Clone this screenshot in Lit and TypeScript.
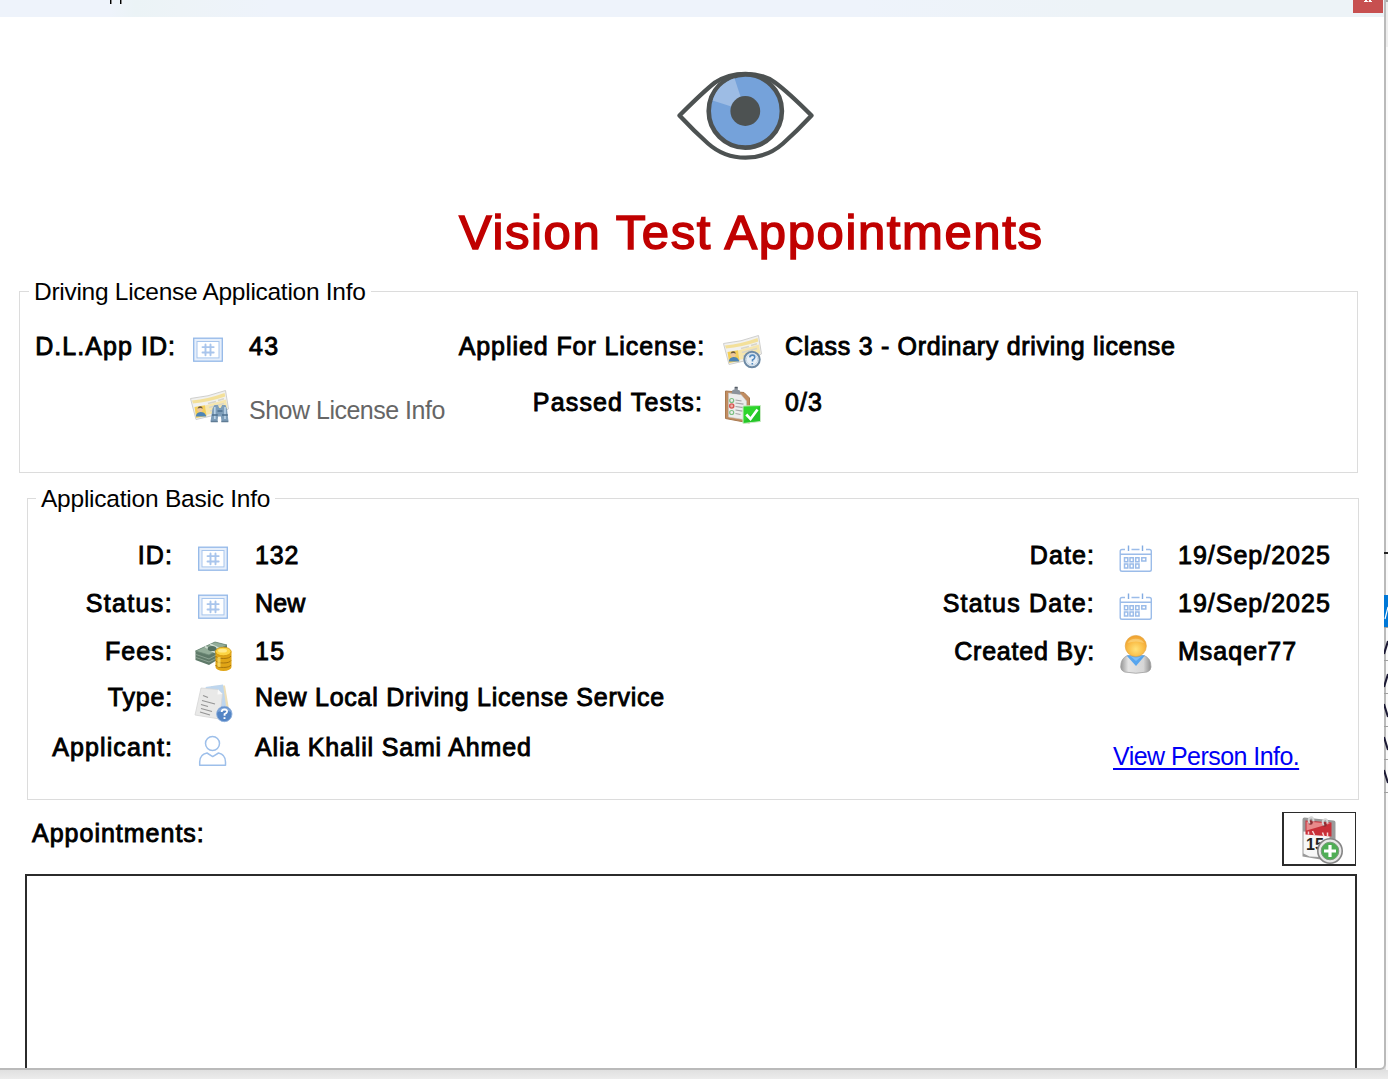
import { LitElement, html, css, svg, type TemplateResult } from "lit";
import { customElement } from "lit/decorators.js";
import { classMap } from "lit/directives/class-map.js";
import { styleMap } from "lit/directives/style-map.js";

type Art = TemplateResult;

const hash = svg`
  <rect x="5.7" y="10.2" width="28.6" height="23" fill="#e6effb" stroke="#93b8e8" stroke-width="1.3"/>
  <rect x="9" y="13.500" width="22" height="16.4" fill="#fff" stroke="#a8c6ed" stroke-width="1"/>
  <path d="M17.500 16.500v10.800M22.500 16.500v10.800M14.500 19.100h11.200M14.500 24.500h11.200" stroke="#a9c5ec" stroke-width="1.900" stroke-linecap="round"/>`;

const card = svg`
  <path d="M2.500 15.500 Q20 14 37.500 7.500 L40.500 26 Q25 34 8 36.500 Z" fill="#f1f1ef" stroke="#cfcfcd" stroke-width="1"/>
  <path d="M4 17.500 Q20 16 36.500 10 L37.300 13.500 Q21 19 5 20.500Z" fill="#f3e09a"/>
  <path d="M17 22.500L38 16.500L39.300 25Q30 30 18 32Z" fill="#f6e6ae"/>
  <path d="M20 20.500l8-2M30 17.500l6-1.800M21 24.500l15-4M22 28l12-3" stroke="#d9d6c8" stroke-width="1.600"/>
  <path d="M6.500 24L17 22.300L18.500 33L8.200 35Z" fill="#f4cf58"/>
  <circle cx="12" cy="26.500" r="2.700" fill="#edc79b"/>
  <path d="M9.500 25.500q1-3 4.500-1.800l.8 2q-2-1.300-5.300-.2z" fill="#6b5a3c"/>
  <path d="M7.800 33.500q.5-4.200 4.700-4.500q4-.1 5.500 3.400l.2 1z" fill="#4d84b6"/>`;

const cardHelp = svg`${card}
  <circle cx="31" cy="31.500" r="7.700" fill="#e9f0f6" stroke="#6d8aa5" stroke-width="2"/>
  <circle cx="31" cy="31.500" r="5.700" fill="none" stroke="#c0d2e2" stroke-width=".9"/>
  <path d="M28.700 29.300q.4-2.300 2.800-2.200q2.600.3 2.200 2.500q-.3 1.200-2.200 2.400v1.500M31.300 35v1.500" fill="none" stroke="#5289bd" stroke-width="1.600"/>`;

const cardFind = svg`${card}
  <path d="M24.500 25.500l2-3.500h3.400l1.300 3h1.600l1.300-3h3.400l1.500 4 1.500 12.500h-7l-.6-5h-2.800l-.6 5h-7z" fill="#7d9db9"/>
  <path d="M26.800 24v12M37 24v12" stroke="#b9d2e6" stroke-width="1.700"/>
  <path d="M24 32h5.800M34 32h5.800M29.500 28h5" stroke="#4c6f8e" stroke-width="1.300"/>
  <path d="M22.800 38.500h7M33.300 38.500h7" stroke="#5f7c95" stroke-width="1.400"/>`;

const clipboard = svg`
  <path d="M4.500 7L23 8.500L28.500 14V39L4.500 34.500Z" fill="#c18c5f" stroke="#a87950" stroke-width="1"/>
  <path d="M7.500 9L20 10.500L25.500 17V36L7.500 33Z" fill="#ececec" stroke="#c5c5c5" stroke-width=".6"/>
  <path d="M10.500 9.500l1-3.500 2-.5v-2.300h3.300v2.500l2 .8.800 4z" fill="#8b929b"/>
  <path d="M13.800 3.500h2.800" stroke="#555d67" stroke-width="1.500"/>
  <path d="M14.500 16l6 1M14.500 19l8 1.200M14.500 22.500l8 1.200M14.500 26l7 1.200M14.500 29.500l5 1" stroke="#a4a4a4" stroke-width="1.200"/>
  <circle cx="10.700" cy="16.500" r="2" fill="none" stroke="#7cbf83" stroke-width="1.200"/>
  <circle cx="10.700" cy="22" r="2.100" fill="#ebb0ad" stroke="#d75750" stroke-width="1.400"/>
  <circle cx="10.700" cy="28.500" r="2" fill="none" stroke="#7cbf83" stroke-width="1.200"/>
  <path d="M22 22L39.500 21.500V37.500L22 39.500Z" fill="#2ed62c" stroke="#c9e9c5" stroke-width="1"/>
  <path d="M23 37.500L39 22v15l-16 1.600z" fill="#19b422" opacity=".5"/>
  <path d="M25.300 30.500l4.200 4.500l7-9.500" fill="none" stroke="#fff" stroke-width="2.700"/>`;

const money = svg`
  <path d="M2.500 18L22 9L34 12V21L16 32L2.500 27Z" fill="#5f7a69"/>
  <path d="M2.500 18L22 9L34 12L16 22Z" fill="#93ad99" stroke="#6f8a78" stroke-width=".8"/>
  <path d="M12 13.500l10 6M17 11l10 5" stroke="#d0ddd2" stroke-width="1.700"/>
  <ellipse cx="19" cy="15.500" rx="4.300" ry="2.600" fill="#557061"/>
  <path d="M3 21.500l13 4.500 9-5M3 24.500l13 4.500 8-4" fill="none" stroke="#9fb3a4" stroke-width=".7"/>
  <path d="M22.500 18.500v15.500a8 4 0 0 0 16 0v-15.500z" fill="#e0a516"/>
  <path d="M22.500 23a8 3.300 0 0 0 15.500 0M22.500 27.500a8 3.300 0 0 0 15.500 0M22.500 32a8 3.300 0 0 0 15.500 0" fill="none" stroke="#a8750c" stroke-width="1"/>
  <path d="M26 24v10" stroke="#ffe774" stroke-width="3" opacity=".7"/>
  <ellipse cx="30.300" cy="18.500" rx="7.800" ry="4.300" fill="#fcd443" stroke="#cf930e" stroke-width=".8"/>
  <ellipse cx="29.500" cy="17.700" rx="4.500" ry="1.900" fill="#ffe98a"/>`;

const papers = svg`
  <path d="M18 5l14-.5L36.500 31l-12 5z" fill="#eedfb7"/>
  <path d="M12.500 6L30 3.500L34 32l-13 4z" fill="#bed6ee"/>
  <path d="M8 7L25 8.500L29.500 13L26.500 38L2 34Z" fill="#e9e9e8" stroke="#d6d6d6" stroke-width=".8"/>
  <path d="M25 8.500l-.5 5 5-.5z" fill="#fafafa"/>
  <path d="M10 14.500l5 2M9 19.500l13 3.500M8 23.500l7 2M8 27.500l11 3M7 31l10 3" stroke="#949494" stroke-width="1.200"/>
  <circle cx="31.300" cy="33" r="7.700" fill="#5485c5" stroke="#91b1dc" stroke-width=".9"/>
  <path d="M24.500 31a7 6 0 0 1 13.600 0q-6-3-13.600 0z" fill="#91b5e2" opacity=".7"/>
  <path d="M28.600 31q.3-2.600 2.900-2.600q2.800.2 2.500 2.500q-.2 1.200-2.400 2.300v1.600M31.500 36.300v1.700" fill="none" stroke="#fff" stroke-width="1.900"/>`;

const person = svg`
  <g fill="none" stroke="#9dbfea" stroke-width="1.500">
  <circle cx="19.500" cy="14.500" r="7"/>
  <path d="M6.700 36.200H32.500V33q0-7.500-7-9l-5.800 3.600L14 24q-7.300 1.500-7.300 9z" stroke-linejoin="round"/></g>`;

const calendar = svg`
  <g fill="none" stroke="#9bbce9" stroke-width="1.400">
  <path d="M8 12.500H5q-1.800 0-1.800 1.800V32.500q0 1.800 1.800 1.800H32.500q1.800 0 1.800-1.800V14.300q0-1.800-1.800-1.800H29M14.500 12.500h8M3.200 17.300H34.300"/>
  <path d="M11.500 8.500v5.500M25.500 8.500v5.500" stroke="#82abe2"/>
  <path d="M7.500 20.700h3.300v4h-3.300zM13 20.700h3.300v4H13zM18.700 20.700H22v4h-3.300zM24.800 20.700h4v3.300h-4zM7.500 27h3.300v4h-3.300zM13 27h3.300v4H13zM18.700 27H22v4h-3.300z" stroke-width="1.500"/></g>`;

const user = svg`
  <defs>
    <radialGradient id="head" cx=".5" cy=".65" r=".6"><stop offset="0" stop-color="#ffe27a"/><stop offset=".55" stop-color="#fbc14c"/><stop offset="1" stop-color="#f0a332"/></radialGradient>
    <linearGradient id="coat" x1="0" x2="1"><stop offset="0" stop-color="#979797"/><stop offset=".25" stop-color="#e4e4e4"/><stop offset=".75" stop-color="#d6d6d6"/><stop offset="1" stop-color="#8d8d8d"/></linearGradient>
  </defs>
  <path d="M3.700 34q0-9 7-11.500H27q7 2.500 7 11.500q0 3.500-4 5q-11 2.500-22.300 0q-4-1.500-4-5z" fill="url(#coat)" stroke="#a2a2a2" stroke-width=".8"/>
  <path d="M9.500 22.500H28L19 33Z" fill="#57a5ee"/>
  <path d="M12 22q7 5 14 0l-7 6z" fill="#7fbdf5"/>
  <circle cx="18.800" cy="13" r="10.600" fill="url(#head)" stroke="#e1a540" stroke-width=".6"/>
  <path d="M10.500 10a9 7 0 0 1 16.500 0q-8-3-16.500 0z" fill="#fff3c0" opacity=".35"/>`;

interface Row {
  label: string;
  art: Art;
  value: string;
  /* letter tracking in px for each side of the row */
  track?: [number, number];
  mod?: "muted" | "raised" | "inset";
}

@customElement("info-row")
export class InfoRow extends LitElement {
  static properties = { row: { attribute: false } };
  declare row: Row;
  static styles = css`
    :host { display: flex; align-items: center; height: 100%; white-space: pre; }
    .label { box-sizing: border-box; width: var(--label-w); text-align: right; flex: none; }
    .icon { width: 44px; height: 44px; flex: none; margin: 8px 0 0 var(--icon-gap); overflow: visible; }
    .value { margin-left: var(--value-gap); }
    .label, .value { font: 25px/28px "Liberation Sans", sans-serif; -webkit-text-stroke: 0.9px #000; color: #000; }
    .value.muted { color: #666; -webkit-text-stroke: 0; margin-bottom: 2px; }
    .icon.muted { margin-top: -12px; }
    .label.raised, .value.raised { margin-bottom: 3px; }
    .label.inset { padding-right: 2px; }
  `;
  render() {
    const { label, art, value, mod = "", track = [0.7, 0.7] } = this.row;
    const cls = (base: string) =>
      classMap({ [base]: true, muted: mod === "muted", raised: mod === "raised", inset: mod === "inset" });
    return html`<span class=${cls("label")} style=${styleMap({ letterSpacing: `${track[0]}px` })}>${label}</span>
      <svg class=${cls("icon")} viewBox="0 0 44 44" aria-hidden="true">${art}</svg>
      <span class=${cls("value")} style=${styleMap({ letterSpacing: `${track[1]}px` })}>${value}</span>`;
  }
}

@customElement("app-root")
export class AppRoot extends LitElement {
  static styles = css`
    :host { display: block; width: 1388px; height: 1079px; overflow: hidden; font-family: "Liberation Sans", sans-serif; color: #000; }
    * { box-sizing: border-box; }
    .desktop { height: 1079px; display: grid; grid-template: 1070px 9px / 1386px 2px; background: linear-gradient(#e0e0e0 1070px, #ececec 1079px); }
    .window { display: flex; flex-direction: column; background: #fff; border: solid #bababa; border-width: 0 2px 2px 0; border-radius: 0 0 6px 0; overflow: hidden; }
    .titlebar { flex: none; height: 17px; display: flex; background: linear-gradient(90deg, #eef3fb 0, #eef3fb 110px, #ebf3f6 135px, #edf3f7 180px, #eef3fb 270px, #eef3fb 860px, #edf3f7 1100px); }
    .stem { width: 2px; height: 4px; margin-left: 8px; background: linear-gradient(90deg, #000 55%, #888 55%); }
    .stem.first { margin-left: 110px; }
    .close { width: 30px; height: 13px; margin: 0 1px 0 auto; background: #c75050; }
    .close svg { display: block; margin: 0 auto; }
    .eye { flex: none; width: 140px; height: 92px; margin: 53px 0 0 675px; }
    h1 { flex: none; margin: 42px 0 0 459px; height: 56px; font: 49px/56px "Liberation Sans", sans-serif; letter-spacing: 1.62px; color: #c00000; -webkit-text-stroke: 1.5px #c00000; white-space: pre; }
    fieldset { flex: none; margin: 0; padding: 0; border: 1.500px solid #dcdcdc; min-width: 0; display: block; }
    legend { margin: 0 0 0 9px; padding: 0 5px; font-size: 24.500px; line-height: 27px; letter-spacing: -0.28px; white-space: pre; }
    .basic legend { margin-left: 8px; letter-spacing: -0.23px; }
    .cols { display: flex; }
    .driving { width: 1339px; height: 195px; margin: 18px 0 0 19px; }
    .basic { width: 1332px; height: 315px; margin: 12px 0 0 27px; }
    .driving .cols { padding-top: 13px; }
    .basic .cols { padding-top: 19px; }
    .group { display: grid; align-content: start; }
    .d-left { width: 425px; grid-template-rows: 56px 73px; --label-w: 156px; --icon-gap: 12px; --value-gap: 17px; }
    .d-right { grid-template-rows: 56px 56px; --label-w: 260px; --icon-gap: 16px; --value-gap: 20px; }
    .b-left { width: 799px; grid-template-rows: 48px 48px 48px 47px 50px; --label-w: 145px; --icon-gap: 20px; --value-gap: 18px; }
    .b-right { grid-template-rows: 48px 48px 48px 1fr; --label-w: 268px; --icon-gap: 22px; --value-gap: 17px; }
    .link { justify-self: start; margin: 67px 0 0 286px; height: 28px; font-size: 25px; line-height: 28px; letter-spacing: -0.55px; color: #0000f5; text-decoration: underline; text-decoration-thickness: 1.500px; text-underline-offset: 3px; white-space: pre; }
    .bar { flex: none; height: 74px; display: flex; justify-content: space-between; padding: 12px 28px 0 32px; }
    .bar-label { margin-top: 7px; font-size: 25px; line-height: 28px; letter-spacing: 1px; -webkit-text-stroke: 0.9px #000; }
    .add { width: 74px; height: 54px; padding: 0; border: 2px solid #2b2b2b; border-width: 1px 1px 2px 2px; background: #fff; display: block; }
    .add svg { display: block; width: 71px; height: 51px; }
    .list { flex: 1; margin: 0 27px 0 25px; border: 2px solid #2b2b2b; border-bottom: 0; }
    .behind { display: flex; flex-direction: column; background: linear-gradient(#aaa 2px, #eee 2px, #eee 47px, #fafafa 47px); }
    .edge { flex: none; height: 2px; margin: 552px 0 0 -2px; background: #222; }
    .cell { flex: none; height: 33px; margin-left: -2px; border-bottom: 1px solid #a0a0a0; display: flex; align-items: center; }
    .cell.first { margin-top: 41px; background: #0078d7; }
    .cell svg { display: block; }
  `;

  private driving: Row[][] = [
    [
      { label: "D.L.App ID:", art: hash, value: "43", track: [1.05, 1.3] },
      { label: "", art: cardFind, value: "Show License Info", track: [0, -0.5], mod: "muted" },
    ],
    [
      { label: "Applied For License:", art: cardHelp, value: "Class 3 - Ordinary driving license", track: [0.92, 0.7] },
      { label: "Passed Tests:", art: clipboard, value: "0/3", track: [1.15, 1.1], mod: "inset" },
    ],
  ];

  private basic: Row[][] = [
    [
      { label: "ID:", art: hash, value: "132", track: [1.1, 0.8] },
      { label: "Status:", art: hash, value: "New", track: [1.35, 0.2] },
      { label: "Fees:", art: money, value: "15", track: [1.1, 1.3] },
      { label: "Type:", art: papers, value: "New Local Driving License Service", track: [0.8, 0.76], mod: "raised" },
      { label: "Applicant:", art: person, value: "Alia Khalil Sami Ahmed", track: [1.1, 0.83] },
    ],
    [
      { label: "Date:", art: calendar, value: "19/Sep/2025", track: [1.1, 1] },
      { label: "Status Date:", art: calendar, value: "19/Sep/2025", track: [1.23, 1] },
      { label: "Created By:", art: user, value: "Msaqer77", track: [0.8, 1] },
    ],
  ];

  private rows(list: Row[]) {
    return list.map((row) => html`<info-row .row=${row}></info-row>`);
  }

  render() {
    return html`<div class="desktop">
      <main class="window">
        <div class="titlebar">
          <i class="stem first"></i><i class="stem"></i>
          <div class="close"><svg width="10" height="3" viewBox="0 0 10 3"><path d="M2 0h2v1h1v1H1V1h1zM6 0h2v1h1v1H5.500V1H6z" fill="#fff"/></svg></div>
        </div>
        <svg class="eye" viewBox="675 70 140 92" aria-hidden="true">
          <path d="M679.500 115.500Q703 92 715 82.500Q728 73.800 745.500 73.800T775 82.500Q788 92 811.500 115.500Q797 131 783 143.500Q767 157.700 745.500 157.700T708 143.500Q694 131 679.500 115.500Z" fill="#fff" stroke="#4d5252" stroke-width="4.300" stroke-linejoin="round"/>
          <circle cx="745.300" cy="111" r="36.600" fill="#75a2da" stroke="#4d5252" stroke-width="4.600"/>
          <path d="M745.300 111L734.500 78.300A34.300 34.300 0 0 0 712.600 100.500Z" fill="#9dbce4"/>
          <circle cx="745.300" cy="111" r="14.900" fill="#4d5252"/>
        </svg>
        <h1>Vision Test Appointments</h1>
        <fieldset class="driving">
          <legend>Driving License Application Info</legend>
          <div class="cols">
            <div class="group d-left">${this.rows(this.driving[0])}</div>
            <div class="group d-right">${this.rows(this.driving[1])}</div>
          </div>
        </fieldset>
        <fieldset class="basic">
          <legend>Application Basic Info</legend>
          <div class="cols">
            <div class="group b-left">${this.rows(this.basic[0])}</div>
            <div class="group b-right">${this.rows(this.basic[1])}<a class="link">View Person Info.</a></div>
          </div>
        </fieldset>
        <div class="bar">
          <span class="bar-label">Appointments:</span>
          <button class="add" aria-label="Add appointment">
            <svg viewBox="1284.500 813.500 71 51">
              <path d="M1303 820q0-2 2-2l29 3q2 0 2 2v30l-9 8-24-4z" fill="#9a9a9a"/>
              <path d="M1304 832l26 2v24l-20-1-6-3z" fill="#f7f7f7"/>
              <path d="M1306 821l26 2v14l-26-2z" fill="#c92f38"/>
              <path d="M1307 822l24 2-24 7z" fill="#e88a8b"/>
              <path d="M1309 832v3M1313 831.500l2 4M1323 833l1.500 4M1328 833v4" stroke="#f8d4d4" stroke-width="1.500"/>
              <circle cx="1311" cy="823" r="2.300" fill="#8d3035"/><circle cx="1325" cy="825" r="2.300" fill="#8d3035"/>
              <path d="M1310 824q-2-5 1-6t3 4M1324 826q-2-5 1-6t3 4" fill="none" stroke="#d6d6d6" stroke-width="2"/>
              <text x="1306.500" y="850.500" font-family="Liberation Sans, sans-serif" font-weight="700" font-size="16" fill="#222">15</text>
              <circle cx="1330.500" cy="851.500" r="12.200" fill="#e9e9e9" stroke="#858585" stroke-width="1.600"/>
              <circle cx="1330.500" cy="851.500" r="8.800" fill="#4fae55" stroke="#7a9a7b" stroke-width="1"/>
              <path d="M1330.500 845.500v12M1324.500 851.500h12" stroke="#fff" stroke-width="3.200"/>
            </svg>
          </button>
        </div>
        <div class="list"></div>
      </main>
      <div class="behind">
        <div class="edge"></div>
        <div class="cell first"><svg width="4" height="24"><path d="M1 20L4 8" stroke="#fff" stroke-width="1.200"/></svg></div>
        ${[0, 1].map(() => html`<div class="cell"><svg width="4" height="24"><path d="M0 22L4 9" stroke="#1c1a35" stroke-width="2"/></svg></div>`)}
        ${[0, 1, 2].map(() => html`<div class="cell"><svg width="4" height="24"><path d="M0 6L4 19" stroke="#1c1a35" stroke-width="2"/></svg></div>`)}
      </div>
    </div>`;
  }
}
